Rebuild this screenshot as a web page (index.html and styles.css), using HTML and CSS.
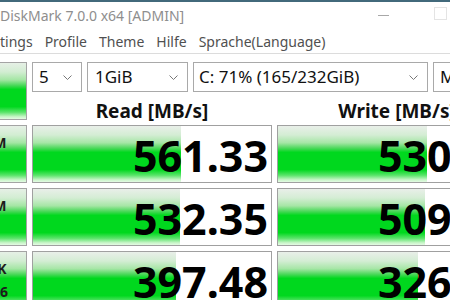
FILE: index.html
```html
<!DOCTYPE html>
<html lang="de">
<head>
<meta charset="utf-8">
<title>CrystalDiskMark</title>
<link rel="stylesheet" href="styles.css">
</head>
<body>
<div class="topline"></div>
<header class="titlebar">
  <span class="title">DiskMark 7.0.0 x64 [ADMIN]</span>
  <span class="winbtns"><span class="min"></span><span class="max"></span></span>
</header>
<nav class="menu">
  <span>tings</span><span>Profile</span><span>Theme</span><span>Hilfe</span><span>Sprache(Language)</span>
</nav>
<main class="grid">
  <div class="side all">All</div>
  <div class="controls">
    <div class="combo c-count"><span>5</span><svg class="chev" width="9" height="5" viewBox="0 0 9 5"><path d="M0.5 0.5 L4.5 4.5 L8.5 0.5" fill="none" stroke="#777" stroke-width="1"/></svg></div>
    <div class="combo c-size"><span>1GiB</span><svg class="chev" width="9" height="5" viewBox="0 0 9 5"><path d="M0.5 0.5 L4.5 4.5 L8.5 0.5" fill="none" stroke="#777" stroke-width="1"/></svg></div>
    <div class="combo c-drive"><span>C: 71% (165/232GiB)</span><svg class="chev" width="9" height="5" viewBox="0 0 9 5"><path d="M0.5 0.5 L4.5 4.5 L8.5 0.5" fill="none" stroke="#777" stroke-width="1"/></svg></div>
    <div class="combo c-unit"><span>MB/s</span></div>
  </div>
  <div class="head">Read [MB/s]</div>
  <div class="head">Write [MB/s]</div>

  <div class="side">SEQ1M<br>Q8T1</div>
  <div class="cell" style="--w:148px">561.33</div>
  <div class="cell" style="--w:149px">530.78</div>

  <div class="side">SEQ1M<br>Q1T1</div>
  <div class="cell" style="--w:147px">532.35</div>
  <div class="cell" style="--w:147px">509.60</div>

  <div class="side">RND4K<br>Q32T16</div>
  <div class="cell" style="--w:143px">397.48</div>
  <div class="cell" style="--w:140px">326.84</div>
</main>
</body>
</html>
```
FILE: styles.css
```css
html, body {
  margin: 0;
  padding: 0;
  background: #ffffff;
}
body {
  width: 450px;
  height: 300px;
  overflow: hidden;
  font-family: "Noto Sans", "Open Sans", sans-serif;
  color: #111;
}
.topline {
  height: 2px;
  background: #42697b;
}
.titlebar {
  display: flex;
  align-items: center;
  height: 28px;
}
.title {
  flex: 1;
  font-size: 14px;
  line-height: 28px;
  color: #8e8e8e;
  white-space: nowrap;
}
.winbtns {
  display: flex;
  align-items: center;
  gap: 45px;
  padding-right: 3px;
}
.min {
  width: 11px;
  height: 1px;
  background: #a8a8a8;
  margin-top: -2px;
}
.max {
  width: 11px;
  height: 11px;
  border: 1px solid #e4e4e4;
  margin-top: -5px;
}
.menu {
  display: flex;
  gap: 12px;
  height: 24px;
  padding-top: 1px;
  box-sizing: border-box;
  font-size: 14px;
  line-height: 22px;
  color: #505050;
  border-bottom: 1px solid #dcdcdc;
  white-space: nowrap;
}
.grid {
  display: grid;
  grid-template-columns: 81px 240px 240px;
  grid-template-rows: 30px 23px 58px 58px 58px;
  column-gap: 5px;
  row-gap: 5px;
  margin-top: 8px;
  margin-left: -54px;
}
.side {
  box-sizing: border-box;
  border: 1px solid #a4a4a4;
  background: linear-gradient(to bottom,
    #e6f0e6 0%, #d2edd2 16%, #a4e6a4 30%, #48d858 40%,
    #00d81e 47%, #00d81e 78%, #5ae46a 88%, #c8f5c8 96%, #e4fbe4 100%);
  font-weight: 700;
  font-size: 14px;
  line-height: 23px;
  text-align: center;
  padding-top: 5px;
  padding-right: 8px;
  color: #1c1c1c;
  overflow: hidden;
  white-space: nowrap;
}
.side.all {
  grid-row: 1 / 3;
  padding-top: 16px;
}
.controls {
  grid-column: 2 / 4;
  display: flex;
  gap: 5px;
}
.combo {
  box-sizing: border-box;
  height: 30px;
  border: 1px solid #a9a9a9;
  background: #fff;
  display: flex;
  align-items: center;
  justify-content: space-between;
  padding-left: 6px;
  font-size: 17px;
  line-height: 28px;
  color: #111;
  white-space: nowrap;
  overflow: hidden;
}
.chev {
  flex: none;
  margin-right: 9px;
}
.c-count { width: 50px; }
.c-size { width: 101px; padding-left: 7px; }
.c-drive { width: 235px; padding-left: 5px; }
.c-unit { width: 84px; }
.head {
  font-weight: 700;
  font-size: 19px;
  line-height: 23px;
  padding-top: 3px;
  text-align: center;
  color: #111;
  white-space: nowrap;
}
.cell {
  box-sizing: border-box;
  border: 1px solid #a0a0a0;
  background-color: #fff;
  background-image: linear-gradient(to bottom,
    #e9efe9 0%, #d4edd4 16%, #a6e6a6 30%, #48d858 40%,
    #00d81e 47%, #00d81e 78%, #5ae46a 88%, #c8f5c8 96%, #e4fbe4 100%);
  background-size: var(--w) 100%;
  background-repeat: no-repeat;
  font-weight: 700;
  font-size: 43px;
  line-height: 56px;
  padding-top: 2px;
  padding-right: 3px;
  text-align: right;
  color: #000;
  overflow: hidden;
  white-space: nowrap;
}
```
